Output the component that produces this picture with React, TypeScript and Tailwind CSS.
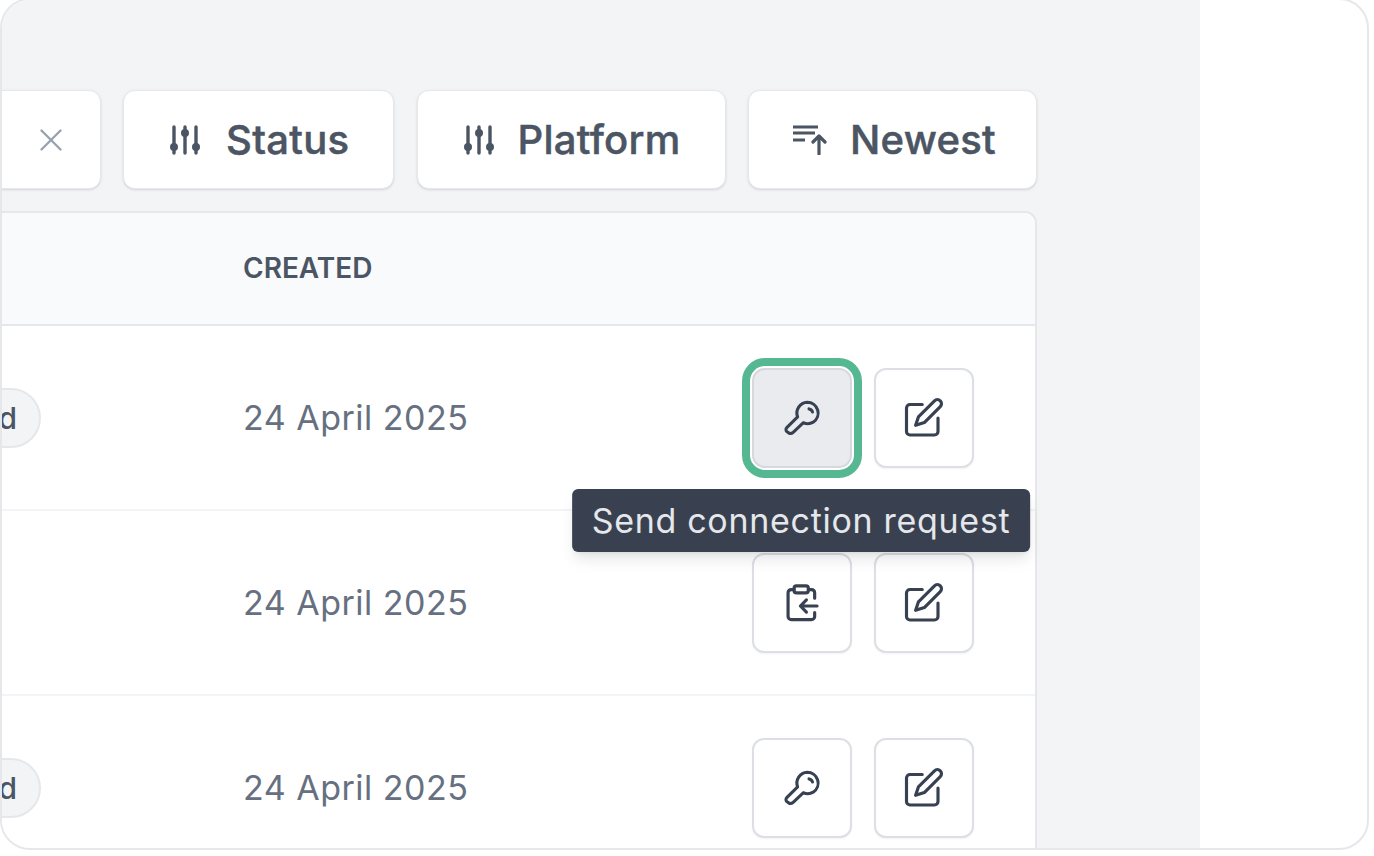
import React from 'react';
import { X } from 'lucide-react';

const SlidersIcon = () => (
  <svg width="30" height="30" viewBox="0 0 30 30" fill="none" stroke="#4b5563" strokeWidth="3.4" strokeLinecap="round">
    <path d="M4 2v26M15 2v26M26 2v26" />
    <circle cx="4" cy="22" r="3" fill="#4b5563" strokeWidth="2" />
    <circle cx="15" cy="8" r="3" fill="#4b5563" strokeWidth="2" />
    <circle cx="26" cy="22" r="3" fill="#4b5563" strokeWidth="2" />
  </svg>
);

const SortIcon = () => (
  <svg width="34" height="30" viewBox="0 0 34 30" fill="none" stroke="#4b5563" strokeWidth="3.2" strokeLinecap="butt" strokeLinejoin="round">
    <path d="M0 2h25M0 8h22M0 15h12" />
    <path d="M26 29V11M20 17l6-6 6 6" strokeLinecap="round" />
  </svg>
);

const KeyIcon = () => (
  <svg width="42" height="42" viewBox="0 0 24 24" fill="none" stroke="#374151" strokeWidth="1.75" strokeLinecap="round" strokeLinejoin="round">
    <path d="M15 3a6.2 6.2 0 0 1 3.4 11.4 6.2 6.2 0 0 1-5.6.3l-6 5.6c-.7.6-1.6.7-2.4.2l-.9-.6c-.8-.6-.9-1.7-.2-2.4l6.2-6.1A6.2 6.2 0 0 1 15 3z" />
    <path d="M16 6.8c1 .2 1.8.8 2 1.8" />
  </svg>
);

const EditIcon = () => (
  <svg width="42" height="42" viewBox="0 0 24 24" fill="none" stroke="#374151" strokeWidth="1.8" strokeLinecap="round" strokeLinejoin="round">
    <path d="M11 4.3H4a2 2 0 0 0-2 2v13.4a2 2 0 0 0 2 2h14a2 2 0 0 0 2-2V12" />
    <path d="M18 2.2a2.3 2.3 0 0 1 3.3 3.3l-9.1 9.1-5 1.6 1.6-4.8z" />
  </svg>
);

const ClipboardIcon = () => (
  <svg width="38" height="38" viewBox="0 0 24 24" fill="none" stroke="#374151" strokeWidth="2" strokeLinecap="round" strokeLinejoin="round">
    <rect x="7" y="1.2" width="9" height="4.4" rx="1.5" />
    <path d="M7 3.5H5.2a2 2 0 0 0-2 2v15a2 2 0 0 0 2 2H18a2 2 0 0 0 2-2V18" />
    <path d="M16 3.5h2a2 2 0 0 1 2 2V9" />
    <path d="M21.5 13.9H11M14.8 10 11 13.9l3.8 3.9" />
  </svg>
);

const Chip = ({ icon, label, className }: { icon: React.ReactNode; label: string; className: string }) => (
  <div className={`flex h-[99px] shrink-0 items-center rounded-xl border border-gray-200 bg-white shadow-sm ${className}`}>
    {icon}
    <span className="text-[40px] font-medium leading-none tracking-[0.3px] text-[#4b5563] [-webkit-text-stroke:0.5px_#4b5563]">{label}</span>
  </div>
);

const ActionButton = ({ children }: { children: React.ReactNode }) => (
  <button className="flex h-[100px] w-[100px] items-center justify-center rounded-xl border-2 border-[#dcdfe4] bg-white shadow-xs">
    {children}
  </button>
);

const Row = ({ pill, children }: { pill?: string; children: React.ReactNode }) => (
  <div className="flex h-[185px] shrink-0 items-center border-b-2 border-gray-100 pr-[61px]">
    <div className="flex flex-1 justify-end">
      {pill && (
        <span className="rounded-full border-2 border-gray-200 bg-gray-100 px-[22px] py-[6px] text-[30px] font-medium leading-[44px] text-[#4b5563]">
          {pill}
        </span>
      )}
    </div>
    <div className="w-[711px] shrink-0 pl-[202px] text-[34px] tracking-[0.5px] text-[#667080]">24 April 2025</div>
    <div className="relative flex gap-[22px]">{children}</div>
  </div>
);

export default function App() {
  return (
    <div className="h-[856px] w-[1374px] overflow-hidden bg-white" style={{ fontFamily: 'Inter, sans-serif' }}>
      <div className="-mt-[2px] flex h-[852px] w-[1369px] overflow-hidden rounded-[30px] border-2 border-gray-200 bg-white">
        <main className="flex h-full w-[1198px] shrink-0 flex-col items-end overflow-hidden bg-gray-100 pr-[163px] pt-[90px]">
          <div className="flex gap-[22.5px]">
            <div className="flex h-[99px] w-[300px] items-center justify-end rounded-xl border border-gray-200 bg-white pr-[30px] shadow-sm">
              <X size={38} strokeWidth={1.5} className="text-gray-400" />
            </div>
            <Chip icon={<SlidersIcon />} label="Status" className="w-[271px] gap-[26px] pl-[46px]" />
            <Chip icon={<SlidersIcon />} label="Platform" className="w-[309px] gap-[24px] pl-[46px]" />
            <Chip icon={<SortIcon />} label="Newest" className="w-[289px] gap-[23px] pl-[44px]" />
          </div>
          <div className="mt-[22px] flex w-[1400px] flex-1 flex-col rounded-t-xl border-2 border-b-0 border-gray-200 bg-white">
            <div className="flex h-[113px] shrink-0 items-center justify-end rounded-t-xl border-b-2 border-gray-200 bg-gray-50 pb-[2px] pr-[662px] text-[28px] font-semibold text-[#4b5563]">
              <span className="w-[130px]">CREATED</span>
            </div>
            <Row pill="Connected">
              <div className="relative h-[100px] w-[100px]">
                <button className="flex h-full w-full items-center justify-center rounded-[13px] border-2 border-[#d5d8dd] bg-[#e9ebef] outline-[8px] outline-offset-[2px] outline-[#56b892] [outline-style:solid]">
                  <KeyIcon />
                </button>
                <div className="absolute left-[calc(50%-1px)] top-[121px] z-10 h-[63px] -translate-x-1/2 whitespace-nowrap rounded-md bg-[#394150] px-[19.5px] text-[34px] leading-[63px] tracking-[0.7px] text-gray-200 shadow-lg">
                  Send connection request
                </div>
              </div>
              <ActionButton>
                <EditIcon />
              </ActionButton>
            </Row>
            <Row>
              <ActionButton>
                <ClipboardIcon />
              </ActionButton>
              <ActionButton>
                <EditIcon />
              </ActionButton>
            </Row>
            <Row pill="Connected">
              <ActionButton>
                <KeyIcon />
              </ActionButton>
              <ActionButton>
                <EditIcon />
              </ActionButton>
            </Row>
          </div>
        </main>
      </div>
    </div>
  );
}
